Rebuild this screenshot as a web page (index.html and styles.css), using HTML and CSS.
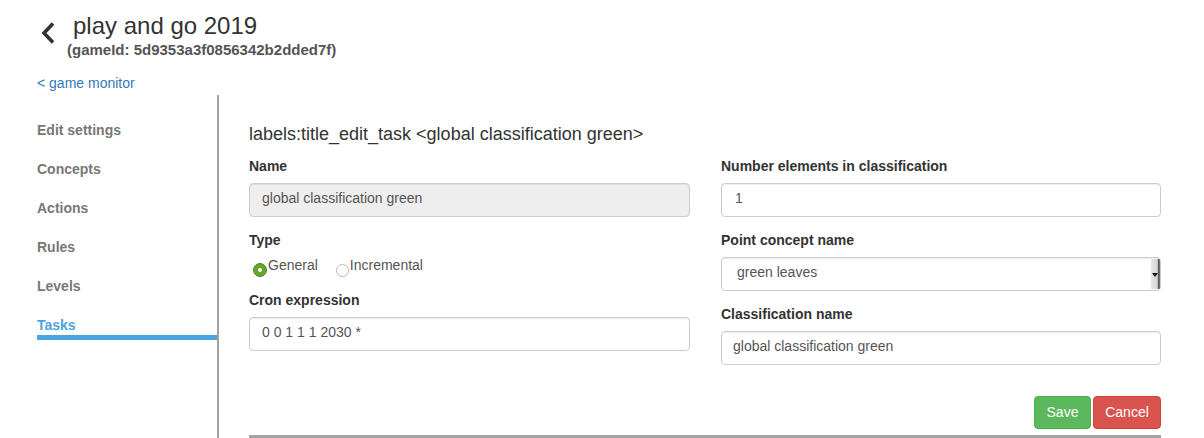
FILE: index.html
```html
<!DOCTYPE html>
<html lang="en">
<head>
<meta charset="utf-8">
<title>play and go 2019</title>
<link rel="stylesheet" href="styles.css">
</head>
<body>
<header class="top">
  <a class="back" href="#" aria-label="back">
    <svg width="16" height="22" viewBox="0 0 16 22"><polyline points="13,1.5 4,11 13,20.5" fill="none" stroke="#333" stroke-width="3.6" stroke-linecap="butt" stroke-linejoin="miter"/></svg>
  </a>
  <div class="titles">
    <div class="title">play and go 2019</div>
    <div class="gameid">(gameId: 5d9353a3f0856342b2dded7f)</div>
  </div>
</header>
<a class="monitor" href="#">&lt; game monitor</a>
<div class="layout">
  <nav class="sidebar">
    <a class="nav-item" href="#">Edit settings</a>
    <a class="nav-item" href="#">Concepts</a>
    <a class="nav-item" href="#">Actions</a>
    <a class="nav-item" href="#">Rules</a>
    <a class="nav-item" href="#">Levels</a>
    <a class="nav-item active" href="#">Tasks</a>
  </nav>
  <main class="main">
    <h3 class="heading">labels:title_edit_task &lt;global classification green&gt;</h3>
    <div class="grid">
      <div class="col">
        <div class="group">
          <label class="label">Name</label>
          <div class="input disabled">global classification green</div>
        </div>
        <div class="group">
          <label class="label">Type</label>
          <div class="radios">
            <span class="radio-opt"><span class="radio on"></span>General</span>
            <span class="radio-opt"><span class="radio"></span>Incremental</span>
          </div>
        </div>
        <div class="group">
          <label class="label">Cron expression</label>
          <div class="input">0 0 1 1 1 2030 *</div>
        </div>
      </div>
      <div class="col">
        <div class="group">
          <label class="label">Number elements in classification</label>
          <div class="input num">1</div>
        </div>
        <div class="group">
          <label class="label">Point concept name</label>
          <div class="input select"><span class="sel-text">green leaves</span><span class="sel-arrow"><span class="tri"></span></span></div>
        </div>
        <div class="group">
          <label class="label">Classification name</label>
          <div class="input cls">global classification green</div>
        </div>
      </div>
    </div>
    <div class="actions">
      <button class="btn save">Save</button>
      <button class="btn cancel">Cancel</button>
    </div>
    <div class="rule"></div>
  </main>
</div>
</body>
</html>
```
FILE: styles.css
```css
* { box-sizing: border-box; }
html, body { margin: 0; padding: 0; background: #fff; }
body {
  font-family: "Liberation Sans", Arial, Helvetica, sans-serif;
  font-size: 14px;
  color: #333;
  width: 1204px;
  height: 438px;
  overflow: hidden;
}
a { text-decoration: none; }

.top {
  display: flex;
  align-items: flex-start;
  padding: 12px 0 0 40px;
  height: 59px;
}
.back { display: block; margin-top: 10px; width: 16px; height: 22px; }
.back svg { display: block; }
.titles { margin-left: 17px; }
.title { font-size: 24px; line-height: 28px; color: #333; }
.gameid {
  font-size: 15px;
  font-weight: bold;
  line-height: 18px;
  color: #555;
  margin: 1px 0 0 -6px;
}
.monitor {
  display: block;
  margin: 14px 0 0 37px;
  line-height: 20px;
  height: 20px;
  color: #337ab7;
  width: max-content;
}

.layout {
  display: flex;
  margin-top: 2px;
  height: 343px;
}
.sidebar {
  width: 219px;
  padding: 16px 0 0 37px;
  border-right: 2px solid #a3a3a3;
  display: flex;
  flex-direction: column;
}
.nav-item {
  display: block;
  padding: 10px 0;
  line-height: 19px;
  font-weight: bold;
  color: #777;
}
.nav-item.active {
  color: #4ba3e0;
  padding-bottom: 0;
  border-bottom: 5px solid #4ba3e0;
}

.main {
  width: 942px;
  padding: 29px 0 0 30px;
  display: flex;
  flex-direction: column;
}
.heading {
  margin: 0;
  font-size: 18px;
  line-height: 20px;
  font-weight: normal;
  color: #333;
}
.grid {
  display: grid;
  grid-template-columns: 441px 440px;
  column-gap: 31px;
  margin-top: 12px;
}
.col { display: flex; flex-direction: column; gap: 13px; }
.group { display: flex; flex-direction: column; }
.label {
  font-weight: bold;
  line-height: 20px;
  margin-bottom: 7px;
  color: #333;
}
.input {
  height: 34px;
  border: 1px solid #ccc;
  border-radius: 4px;
  padding: 0 12px;
  line-height: 29px;
  color: #555;
  background: #fff;
  box-shadow: inset 0 1px 1px rgba(0,0,0,.075);
}
.input.disabled { background: #eee; }
.input.num { padding-left: 13px; }
.input.cls { padding-left: 11px; }

.radios {
  display: flex;
  gap: 18px;
  height: 20px;
  line-height: 20px;
  margin: -2px 0 2px 4px;
  color: #555;
}
.radio-opt { display: flex; align-items: flex-start; }
.radio {
  width: 13px;
  height: 13px;
  border-radius: 50%;
  border: 1px solid #b8b8b8;
  background: #fff;
  margin-top: 9px;
  margin-right: 1px;
  display: flex;
  align-items: center;
  justify-content: center;
}
.radio.on {
  width: 14px;
  height: 14px;
  border: 1px solid #4c8a1b;
  background: #64a72b;
  margin-top: 8px;
}
.radio.on::after {
  content: "";
  width: 4px;
  height: 4px;
  border-radius: 50%;
  background: #fff;
}

.input.select {
  display: flex;
  padding: 0 0 0 15px;
  overflow: hidden;
}
.sel-text { flex: 1; }
.sel-arrow {
  width: 9px;
  margin: 1px 0 1px 0;
  background: linear-gradient(to right, #e6e6e6, #d6d6d6 70%, #5a5a5a 80%, #777);
  display: flex;
  align-items: center;
  justify-content: center;
  padding-right: 2px;
}
.tri {
  width: 0;
  height: 0;
  border-left: 3px solid transparent;
  border-right: 3px solid transparent;
  border-top: 4px solid #111;
  margin-top: 1px;
}

.actions {
  display: flex;
  justify-content: flex-end;
  gap: 2px;
  margin-top: 31px;
}
.btn {
  font-family: inherit;
  font-size: 14px;
  height: 33px;
  border-radius: 4px;
  color: #fff;
  padding: 0 12px;
  line-height: 31px;
  cursor: pointer;
}
.btn.save { width: 57px; background: #5cb85c; border: 1px solid #4cae4c; padding: 0; }
.btn.cancel { width: 68px; background: #d9534f; border: 1px solid #d43f3a; padding: 0; }
.rule {
  margin-top: 6px;
  height: 3px;
  background: #a3a3a3;
}
```
